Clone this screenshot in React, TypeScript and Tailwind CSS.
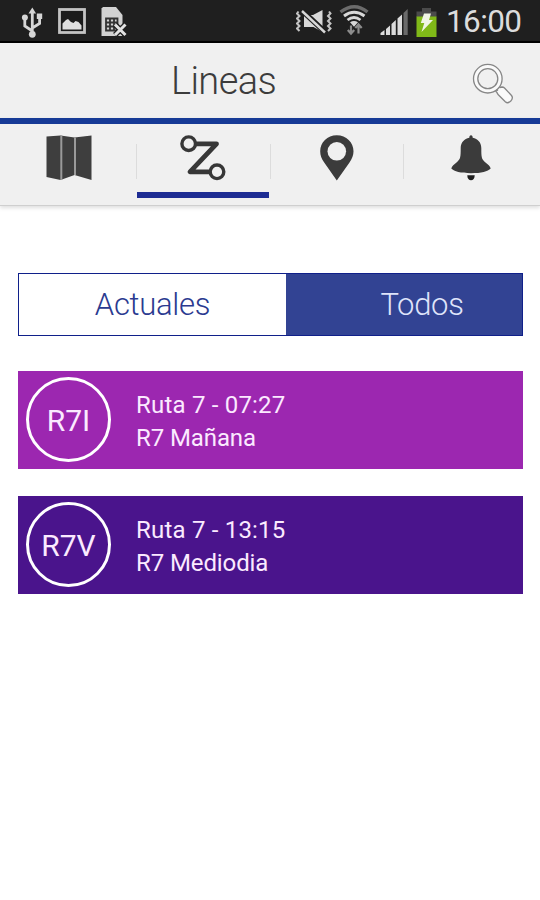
import { ReactNode } from "react";

interface Route {
  code: string;
  title: string;
  name: string;
  bg: string;
}

const ROUTES: Route[] = [
  { code: "R7I", title: "Ruta 7 - 07:27", name: "R7 Mañana", bg: "bg-[#9c27b0]" },
  { code: "R7V", title: "Ruta 7 - 13:15", name: "R7 Mediodia", bg: "bg-[#4a148c]" },
];

function UsbIcon() {
  return (
    <svg width="24" height="32" viewBox="20 7 24 32" fill="none" stroke="#d6d6d6" strokeWidth="2.8">
      <path d="M32.3 12v22M32.3 31l-7.5-5V17M32.3 28l7.300-4.500V16" />
      <path d="M32.3 7.500l3.800 6h-7.600z" fill="#d6d6d6" stroke="none" />
      <circle cx="32.300" cy="34.300" r="3.400" fill="#d6d6d6" stroke="none" />
      <circle cx="24.900" cy="17.500" r="3" fill="#d6d6d6" stroke="none" />
      <path d="M36.800 13.500h5.400V19h-5.400z" fill="#d6d6d6" stroke="none" />
    </svg>
  );
}

function PictureIcon() {
  return (
    <svg width="28" height="26" viewBox="58 8.5 28 26">
      <rect x="59.5" y="10" width="25" height="23" fill="#1b1b1b" stroke="#c4c4c4" strokeWidth="2.800" />
      <path d="M62.500 30v-6l3.500-3.500 2-1 3 3 2.500 1 2-2 3 1 3 3.500v4z" fill="#dedede" />
    </svg>
  );
}

function SimIcon() {
  return (
    <svg width="27" height="32" viewBox="101 6.5 27 32">
      <path d="M103 7.500h13l6.500 8V36.500H101.500V9z" fill="#d2d2d2" />
      <path
        d="M106 19h11.500v12H106zM106 23h11.500M106 27h11.500M110 19v12M114 19v12"
        fill="none"
        stroke="#333"
        strokeWidth="1.800"
      />
      <path d="M115 25l10.500 10.500M125.500 25L115 35.500" stroke="#1f1f1f" strokeWidth="5.500" />
      <path d="M115 25l10.500 10.500M125.500 25L115 35.500" stroke="#e2e2e2" strokeWidth="3" />
    </svg>
  );
}

function VibrateMuteIcon() {
  return (
    <svg width="36" height="26" viewBox="296 9.500 36 26">
      <path
        d="M298.500 12l-1.500 2 2.500 2.500-2.500 2.500 2.500 2.500-2.500 2.500 2.500 2.500-2.500 2.500 2.500 2.500M329 12l1.500 2-2.500 2.500 2.500 2.500-2.500 2.500 2.500 2.500-2.500 2.500 2.500 2.500-2.500 2.500"
        fill="none"
        stroke="#c4c4c4"
        strokeWidth="2"
      />
      <path d="M304 15.500h9l9.500-5v22l-9-5H304z" fill="#d8d8d8" />
      <path d="M302 11l23 21.500" stroke="#1f1f1f" strokeWidth="5.500" />
      <path d="M302 11.500l23 21.500" stroke="#d8d8d8" strokeWidth="2.400" />
    </svg>
  );
}

function WifiIcon() {
  return (
    <svg width="30" height="31" viewBox="339 5.500 30 31" fill="none">
      <path d="M340.500 12.500q14-10.500 27 0" stroke="#6c6c6c" strokeWidth="3.400" />
      <path d="M344 16.500q10-7.500 20.500 0" stroke="#d8d8d8" strokeWidth="3" />
      <path d="M347.500 20.500q6.500-5 13 0" stroke="#d8d8d8" strokeWidth="2.800" />
      <path d="M350 22.800q4-2.500 8 0l-4 4.500z" fill="#d8d8d8" />
      <path
        d="M351 26v7.500M347.800 30.500l3.200 3.500 3.200-3.500M358.500 34v-8M355.300 28.500l3.200-3.500 3.200 3.500"
        stroke="#8c8c8c"
        strokeWidth="2.200"
      />
    </svg>
  );
}

function SignalIcon() {
  return (
    <svg width="29" height="28" viewBox="380 8.500 29 28" fill="#dcdcdc">
      <path d="M380.500 35.500v-2l4-3v5zM386 35.500v-6l4-3.500v9.500zM391.500 35.500V24.500l4.300-4v15zM397.500 35.500V19l4.500-4v20.500z" />
      <path d="M403.500 35.500V13.500l4.200-4v26z" fill="#6a6a6a" />
    </svg>
  );
}

function BatteryIcon() {
  return (
    <svg width="21" height="29" viewBox="416 8 21 29">
      <path d="M422 8h9v3.500h5.500V17h-20v-5.500h5.500z" fill="#4b4b4b" />
      <path d="M416.500 16.500h20V37h-20z" fill="#80b918" />
      <path d="M424 13.500h7l-2 6.500h4L421.500 32l2.800-9h-3.500z" fill="#f0f5e5" />
    </svg>
  );
}

function StatusBar() {
  return (
    <div className="flex h-[43px] items-start border-b-2 border-black bg-[#1f1f1f] pl-5">
      <div className="pt-[7px]"><UsbIcon /></div>
      <div className="ml-[14px] pt-[8px]"><PictureIcon /></div>
      <div className="ml-[15px] pt-[6px]"><SimIcon /></div>
      <div className="ml-[168px] pt-[9px]"><VibrateMuteIcon /></div>
      <div className="ml-[7px] pt-[5px]"><WifiIcon /></div>
      <div className="ml-[11px] pt-[8px]"><SignalIcon /></div>
      <div className="ml-[7px] pt-[8px]"><BatteryIcon /></div>
      <span className="ml-[9px] text-[31.500px] leading-[44px] tracking-[-0.6px] text-[#dcdcdc]">16:00</span>
    </div>
  );
}

function SearchIcon() {
  return (
    <svg width="42" height="42" viewBox="472 63 42 42" fill="#fafafa" stroke="#868686" strokeWidth="1.300">
      <path d="M496 91.500l1.500-1.500-1-2 1.500-1.500 2 1 2-.5q1.500 0 2.500 1l7 7.500q2 2.500-.7 5.500-3 3-5.500.7l-7-7q-1-1-1.300-2.200z" />
      <circle cx="487.800" cy="78.700" r="14.300" />
      <circle cx="487.800" cy="78.700" r="10" fill="#f0f0f0" />
    </svg>
  );
}

function MapIcon() {
  return (
    <svg width="46" height="46" viewBox="46 135 46 46">
      <path d="M46.500 136.500l14-1 14 2 17-2V180l-17-5-14 5-14-3z" fill="#3e3e3e" />
      <path d="M61.300 135.500V180M75 137.500V175" stroke="#9a9a9a" strokeWidth="2" />
    </svg>
  );
}

function RouteIcon() {
  return (
    <svg width="48" height="48" viewBox="179 134 48 48" fill="none" stroke="#373737">
      <path d="M196 143.800h20.500L190 171.800h21" strokeWidth="4.800" strokeLinejoin="round" />
      <circle cx="188.700" cy="143.700" r="6.800" fill="#f0f0f0" strokeWidth="3.400" />
      <circle cx="217" cy="171.800" r="6.800" fill="#f0f0f0" strokeWidth="3.400" />
    </svg>
  );
}

function PinIcon() {
  return (
    <svg width="36" height="46" viewBox="319 135 36 46">
      <path
        d="M336.800 135.300c9.500 0 16.700 7 16.700 16 0 4-1.500 7.500-4 11.300L336.800 180.500 324.200 162.600c-2.700-3.800-4-7.300-4-11.300 0-9 7.100-16 16.600-16z"
        fill="#3b3b3b"
      />
      <circle cx="336.800" cy="151.300" r="9.300" fill="#f0f0f0" />
    </svg>
  );
}

function BellIcon() {
  return (
    <svg width="40" height="46" viewBox="450.500 135 40 46" fill="#3b3b3b">
      <path d="M470.500 135.300c1.200 0 1.700.9 1.700 2.500 5 1 8.600 4.700 8.600 10.200 0 9.500.2 11 4.200 14.500 2.500 2 4.500 3.600 5.200 6-3 3-9.200 4.700-19.700 4.700s-16.700-1.700-19.700-4.700c.7-2.400 2.700-4 5.200-6 4-3.500 4.200-5 4.200-14.500 0-5.500 3.600-9.200 8.600-10.200 0-1.600.5-2.500 1.700-2.500z" />
      <path d="M466.800 175.300h7.400c0 3.200-1.600 5-3.700 5s-3.700-1.800-3.700-5z" fill="#1e1e1e" />
    </svg>
  );
}

function Tab({ children, active }: { children: ReactNode; active?: boolean }) {
  return (
    <button type="button" className="flex h-[74px] flex-1 flex-col items-center justify-between">
      <span className="flex h-[68px] items-center">{children}</span>
      {active && <span className="h-[6px] w-[132px] shrink-0 bg-[#1d2c93]" />}
    </button>
  );
}

const Divider = () => <div className="mt-[20px] h-[35px] w-px bg-[#dcdcdc]" />;

export default function App() {
  return (
    <div className="min-h-[900px] w-[540px] overflow-hidden bg-white font-[Roboto,sans-serif]">
      <StatusBar />

      <header className="flex h-[75px] items-center justify-between bg-[#f0f0f0] pr-[26px] pl-[171px]">
        <h1 className="pt-[2px] text-[38px] leading-[75px] font-light tracking-[-0.6px] text-[#3c3c3c]">Lineas</h1>
        <div className="pt-[7px]"><SearchIcon /></div>
      </header>

      <nav className="flex h-[88px] border-t-[6px] border-b border-t-[#163a96] border-b-[#cfcfcf] bg-[#f0f0f0] px-[3px] shadow-[0_2px_4px_rgba(0,0,0,0.13)]">
        <Tab><MapIcon /></Tab>
        <Divider />
        <Tab active><RouteIcon /></Tab>
        <Divider />
        <Tab><PinIcon /></Tab>
        <Divider />
        <Tab><BellIcon /></Tab>
      </nav>

      <main className="pt-[67px] pr-[17px] pl-[18px]">
        <div className="flex h-[63px] border border-[#10208a] text-[31px] leading-[62px] font-light tracking-[-0.3px]">
          <button type="button" className="w-[267px] text-center text-[#2b3a90]">Actuales</button>
          <button type="button" className="flex-1 bg-[#324393] pl-[36px] text-center text-[#dfe4fa]">Todos</button>
        </div>

        <div className="mt-[35px] flex flex-col gap-[27px]">
          {ROUTES.map((route) => (
            <div key={route.code} className={`flex h-[98px] items-start pt-[6px] pl-2 text-[#fbeaff] ${route.bg}`}>
              <div className="flex size-[85px] items-center justify-center rounded-full border-[3.500px] border-white pt-[2px] text-[30px]">
                {route.code}
              </div>
              <div className="ml-[25px] pt-[12px] text-[24px] leading-[33px]">
                <div className="tracking-[0.2px]">{route.title}</div>
                <div className="tracking-[-0.1px]">{route.name}</div>
              </div>
            </div>
          ))}
        </div>
      </main>
    </div>
  );
}
